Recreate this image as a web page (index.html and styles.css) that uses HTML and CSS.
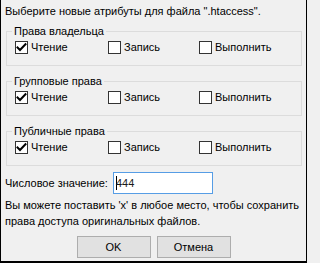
FILE: index.html
```html
<!DOCTYPE html>
<html lang="ru">
<head>
<meta charset="utf-8">
<title>Атрибуты файла</title>
<link rel="stylesheet" href="styles.css">
</head>
<body>
<div class="dialog">
  <p class="intro">Выберите новые атрибуты для файла ".htaccess".</p>

  <fieldset class="group">
    <legend>Права владельца</legend>
    <div class="perms">
      <label class="check"><span class="box"><svg viewBox="0 0 11 11" width="11" height="11"><path d="M1.5 5.5 L4 8 L9.5 2.2" /></svg></span>Чтение</label>
      <label class="check"><span class="box"></span>Запись</label>
      <label class="check"><span class="box"></span>Выполнить</label>
    </div>
  </fieldset>

  <fieldset class="group">
    <legend>Групповые права</legend>
    <div class="perms">
      <label class="check"><span class="box"><svg viewBox="0 0 11 11" width="11" height="11"><path d="M1.5 5.5 L4 8 L9.5 2.2" /></svg></span>Чтение</label>
      <label class="check"><span class="box"></span>Запись</label>
      <label class="check"><span class="box"></span>Выполнить</label>
    </div>
  </fieldset>

  <fieldset class="group">
    <legend>Публичные права</legend>
    <div class="perms">
      <label class="check"><span class="box"><svg viewBox="0 0 11 11" width="11" height="11"><path d="M1.5 5.5 L4 8 L9.5 2.2" /></svg></span>Чтение</label>
      <label class="check"><span class="box"></span>Запись</label>
      <label class="check"><span class="box"></span>Выполнить</label>
    </div>
  </fieldset>

  <div class="numeric">
    <span class="numeric-label">Числовое значение:</span>
    <div class="field"><span class="caret"></span>444</div>
  </div>

  <p class="hint">Вы можете поставить 'x' в любое место, чтобы сохранить права доступа оригинальных файлов.</p>

  <div class="buttons">
    <button class="btn">OK</button>
    <button class="btn">Отмена</button>
  </div>
</div>
</body>
</html>
```

FILE: styles.css
```css
html, body {
  margin: 0;
  padding: 0;
}

body {
  font-family: "Liberation Sans", Arial, sans-serif;
  font-size: 11px;
  color: #000;
  background: #f0f0f0;
}

.dialog {
  box-sizing: border-box;
  width: 307px;
  height: 263px;
  background: #f0f0f0;
  border-left: 1px solid #000;
  border-right: 1px solid #000;
  border-bottom: 2px solid #000;
  display: flex;
  flex-direction: column;
}

.intro {
  margin: 0;
  padding: 4px 0 0 4px;
  line-height: 14px;
}

.group {
  margin: 6px 4px 0 5px;
  padding: 3px 0 11px 5px;
  border: 1px solid #dcdcdc;
  min-width: 0;
}

.group + .group {
  margin-top: 8px;
}

.group legend {
  padding: 0 2px;
  line-height: 14px;
}

.perms {
  display: grid;
  grid-template-columns: 93px 91px auto;
  padding-left: 3px;
}

.check {
  display: flex;
  align-items: center;
  gap: 3px;
  height: 13px;
  line-height: 13px;
}

.box {
  box-sizing: border-box;
  width: 13px;
  height: 13px;
  border: 1px solid #333;
  background: #fff;
  display: flex;
  align-items: center;
  justify-content: center;
}

.box svg path {
  fill: none;
  stroke: #000;
  stroke-width: 2;
  stroke-linecap: square;
}

.numeric {
  display: flex;
  align-items: center;
  margin: 6px 0 0 4px;
}

.numeric-label {
  flex: 0 0 108px;
  white-space: nowrap;
}

.field {
  box-sizing: border-box;
  width: 100px;
  height: 22px;
  border: 1px solid #569de5;
  background: #fff;
  padding-left: 2px;
  display: flex;
  align-items: center;
  line-height: 14px;
  color: #1a1a1a;
}

.caret {
  width: 1px;
  height: 14px;
  background: #000;
  margin-right: -1px;
}

.hint {
  margin: 3px 4px 0 4px;
  line-height: 16px;
}

.buttons {
  display: flex;
  justify-content: center;
  gap: 6px;
  margin-top: 7px;
}

.btn {
  box-sizing: border-box;
  width: 74px;
  height: 22px;
  border: 1px solid #adadad;
  background: #e1e1e1;
  font-family: inherit;
  font-size: 11px;
  color: #000;
  padding: 0;
}
```
